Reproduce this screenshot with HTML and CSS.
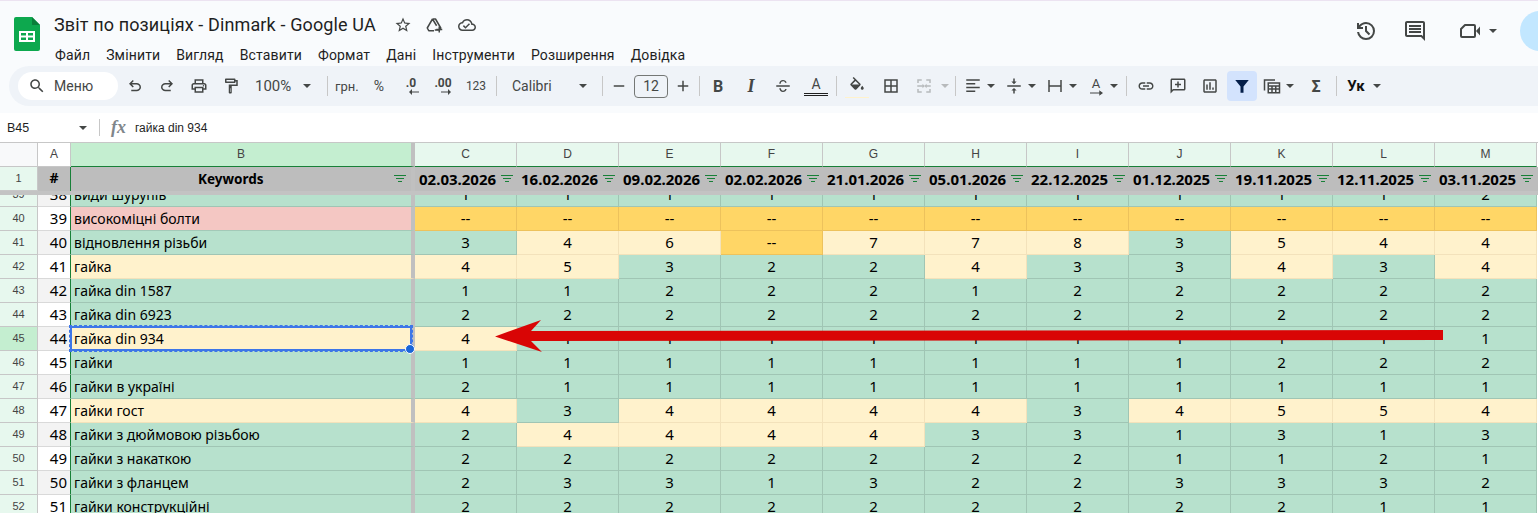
FILE: index.html
```html
<!DOCTYPE html>
<html lang="uk">
<head>
<meta charset="utf-8">
<title>Звіт по позиціях - Dinmark - Google UA</title>
<link rel="stylesheet" href="styles.css">
</head>
<body>
<header class="top">
  <div class="titlebar">
    <svg class="logo" viewBox="0 0 26 34"><path fill="#0da84e" d="M2 0h16l8 8v24a2 2 0 0 1-2 2H2a2 2 0 0 1-2-2V2a2 2 0 0 1 2-2z"/><path fill="#0a7f3a" d="M18 0l8 8h-8z"/><path fill="#fff" d="M5 14h16v11H5z"/><path fill="#0da84e" d="M7 16h5v2.500H7zM14 16h5v2.500h-5zM7 20.500h5V23H7zM14 20.500h5V23h-5z"/></svg>
    <div class="titlecol">
      <div class="titleline">
        <span class="doc">Звіт по позиціях - Dinmark - Google UA</span>
        <svg class="ic18 star" viewBox="0 0 24 24"><path d="M22 9.240l-7.190-.620L12 2 9.190 8.630 2 9.240l5.460 4.730L5.820 21 12 17.270 18.180 21l-1.630-7.030L22 9.240zM12 15.400l-3.760 2.270 1-4.280-3.320-2.880 4.380-.380L12 6.100l1.710 4.040 4.380.380-3.320 2.880 1 4.280L12 15.400z"/></svg>
        <svg class="ic18 drive" viewBox="0 0 24 24"><path class="ln" d="M10 4h4l7 12-1.500 2.500H13M10 4L3 16l2 3.500h7M10 4l5.500 9"/><path d="M18 14h2v3h3v2h-3v3h-2v-3h-3v-2h3z"/></svg>
        <svg class="ic18 cloud" viewBox="0 0 24 24"><path d="M19.350 10.040C18.670 6.590 15.640 4 12 4 9.110 4 6.600 5.640 5.350 8.040 2.340 8.360 0 10.910 0 14c0 3.310 2.690 6 6 6h13c2.760 0 5-2.240 5-5 0-2.640-2.050-4.780-4.650-4.960zM19 18H6c-2.210 0-4-1.790-4-4 0-2.050 1.530-3.760 3.560-3.970l1.070-.110.500-.950C8.080 7.140 9.940 6 12 6c2.620 0 4.880 1.860 5.390 4.430l.300 1.500 1.530.110c1.560.100 2.780 1.410 2.780 2.960 0 1.650-1.350 3-3 3zm-9-3.820l-2.090-2.090L6.500 13.500 10 17l6.010-6.010-1.410-1.410z"/></svg>
      </div>
      <nav class="menu"><span>Файл</span><span>Змінити</span><span>Вигляд</span><span>Вставити</span><span>Формат</span><span>Дані</span><span>Інструменти</span><span>Розширення</span><span>Довідка</span></nav>
    </div>
    <div class="actions">
      <svg class="ic24" viewBox="0 0 24 24"><path d="M12 21q-3.450 0-6.013-2.288T3.050 13H5.100q.350 2.600 2.313 4.300T12 19q2.925 0 4.963-2.037T19 12q0-2.925-2.037-4.962T12 5q-1.725 0-3.225.800T6.250 8H9v2H3V4h2v2.350q1.275-1.600 3.113-2.475T12 3q3.750 0 6.375 2.625T21 12q0 3.750-2.625 6.375T12 21zm2.800-4.800L11 12.400V7h2v4.600l3.200 3.200-1.400 1.400z"/></svg>
      <svg class="ic24 act-comment" viewBox="0 0 24 24"><path d="M20 17.170L18.830 16H4V4h16v13.170zM20 2H4c-1.100 0-2 .900-2 2v12c0 1.100.900 2 2 2h14l4 4V4c0-1.100-.900-2-2-2zM6 12h12v2H6zM6 9h12v2H6zM6 6h12v2H6z"/></svg>
      <svg class="ic24 act-cam" viewBox="0 0 24 24"><path class="ln2" d="M7 6h9a1 1 0 0 1 1 1v10a1 1 0 0 1-1 1H4a1 1 0 0 1-1-1v-7z"/><path d="M18 12l4-4.500v9z"/></svg>
      <i class="caret act-caret"></i>
      <span class="avatar"></span>
    </div>
  </div>
  <div class="toolbar">
    <div class="search"><svg class="ic18" viewBox="0 0 24 24"><path d="M15.500 14h-.790l-.280-.270C15.410 12.590 16 11.110 16 9.500 16 5.910 13.090 3 9.500 3S3 5.910 3 9.500 5.910 16 9.500 16c1.610 0 3.090-.590 4.230-1.570l.270.280v.790l5 4.990L20.490 19l-4.990-5zm-6 0C7.010 14 5 11.990 5 9.500S7.010 5 9.500 5 14 7.010 14 9.500 11.990 14 9.500 14z"/></svg><span>Меню</span></div>
    <span class="btn w32 ml1"><svg class="ic18" viewBox="0 0 24 24"><path d="M7 19v-2h7.100c1.050 0 1.960-.330 2.730-1s1.170-1.500 1.170-2.500-.390-1.830-1.170-2.500-1.680-1-2.730-1H7.800l2.600 2.600L9 14 4 9l5-5 1.400 1.400L7.800 8h6.300c1.620 0 3 .530 4.150 1.580S20 11.960 20 13.500s-.580 2.870-1.750 3.920S15.720 19 14.100 19H7z"/></svg></span>
    <span class="btn w32"><svg class="ic18 flip" viewBox="0 0 24 24"><path d="M7 19v-2h7.100c1.050 0 1.960-.330 2.730-1s1.170-1.500 1.170-2.500-.390-1.830-1.170-2.500-1.680-1-2.730-1H7.800l2.600 2.600L9 14 4 9l5-5 1.400 1.400L7.800 8h6.300c1.620 0 3 .530 4.150 1.580S20 11.960 20 13.500s-.580 2.870-1.750 3.920S15.720 19 14.100 19H7z"/></svg></span>
    <span class="btn w32"><svg class="ic18" viewBox="0 0 24 24"><path d="M19 8h-1V3H6v5H5c-1.660 0-3 1.340-3 3v6h4v4h12v-4h4v-6c0-1.660-1.340-3-3-3zM8 5h8v3H8V5zm8 12v2H8v-4h8v2zm2-2v-2H6v2H4v-4c0-.550.450-1 1-1h14c.550 0 1 .450 1 1v4h-2z"/><circle cx="18" cy="11.500" r="1"/></svg></span>
    <span class="btn w32"><svg class="ic18" viewBox="0 0 24 24"><path d="M18 4V3c0-.550-.450-1-1-1H5c-.550 0-1 .450-1 1v4c0 .550.450 1 1 1h12c.550 0 1-.450 1-1V6h1v4H9v11c0 .550.450 1 1 1h2c.550 0 1-.450 1-1v-9h8V4h-3zm-2 2H6V4h10v2zm-5 8v6h0v-6z"/><path fill="#eff3f8" d="M10.700 15h.600v5h-.600z"/></svg></span>
    <span class="btn zoom"><span>100%</span><i class="caret"></i></span>
    <i class="sep"></i>
    <span class="btn txt w28 left">грн.</span>
    <span class="btn txt w32 pct">%</span>
    <span class="btn w32 dec"><b>.0</b><svg viewBox="0 0 10 6"><path d="M10 2.500H3V0L0 3l3 3V3.500h7z"/></svg></span>
    <span class="btn w32 dec"><b>.00</b><svg viewBox="0 0 10 6"><path d="M0 2.500h7V0l3 3-3 3V3.500H0z"/></svg></span>
    <span class="btn txt w34 small">123</span>
    <i class="sep ml3"></i>
    <span class="btn font"><span>Calibri</span><i class="caret"></i></span>
    <i class="sep"></i>
    <span class="btn w18"><svg class="ic18" viewBox="0 0 24 24"><path d="M5 11h14v2H5z"/></svg></span>
    <span class="size">12</span>
    <span class="btn w18 ml6"><svg class="ic18" viewBox="0 0 24 24"><path d="M19 13h-6v6h-2v-6H5v-2h6V5h2v6h6z"/></svg></span>
    <i class="sep"></i>
    <span class="btn w22 ml0 bold">B</span>
    <span class="btn w32 ml6 ital">I</span>
    <span class="btn w32"><svg class="ic18" viewBox="0 0 24 24"><path d="M3 11h18v2H3zM7 9c0-3 2.500-5 5-5 2.400 0 4.300 1.500 4.800 3.500h-2c-.400-1-1.500-1.700-2.800-1.700-1.500 0-3 1-3 2.700v.500H7zM9.100 15c.300 1.600 1.400 3.200 2.900 3.200 1.400 0 2.500-.800 2.900-2.200h2c-.500 2.400-2.500 4-4.900 4-2.700 0-4.600-2.200-5-5z"/></svg></span>
    <span class="btn w32 ml1 tcolor"><span>A</span></span>
    <i class="sep ml4"></i>
    <span class="btn w26 fill"><svg class="ic18" viewBox="0 0 24 24"><path d="M16.560 8.940L7.620 0 6.210 1.410l2.380 2.380-5.150 5.150c-.590.590-.590 1.540 0 2.120l5.500 5.500c.290.290.680.440 1.060.440s.770-.150 1.060-.440l5.500-5.500c.590-.580.590-1.530 0-2.120zM5.210 10L10 5.210 14.790 10H5.210zM19 11.500s-2 2.170-2 3.500c0 1.100.900 2 2 2s2-.900 2-2c0-1.330-2-3.500-2-3.500z"/></svg></span>
    <span class="btn w32 ml5"><svg class="ic18" viewBox="0 0 24 24"><path d="M3 3v18h18V3H3zm8 16H5v-6h6v6zm0-8H5V5h6v6zm8 8h-6v-6h6v6zm0-8h-6V5h6v6z"/></svg></span>
    <span class="btn w32 ml1 off"><svg class="ic18" viewBox="0 0 24 24"><path d="M3 3h6v2H5v3H3zM15 3h6v5h-2V5h-4zM3 16h2v3h4v2H3zM19 16h2v5h-6v-2h4zM3 11h7V9l3 3-3 3v-2H3zM21 13h-5.500v2l-3-3 3-3v2H21z"/></svg></span>
    <span class="btn w10"><i class="caret off-c"></i></span>
    <i class="sep ml5"></i>
    <span class="btn w20"><svg class="ic18" viewBox="0 0 24 24"><path d="M3 3h18v2H3zM3 8h12v2H3zM3 13h18v2H3zM3 18h12v2H3z"/></svg></span>
    <span class="btn w8 ml4"><i class="caret"></i></span>
    <span class="btn w22 ml8"><svg class="ic18" viewBox="0 0 24 24"><path d="M3 11h18v2H3zM12 9.500l-3.500-3.500H11V2h2v4h2.500zM12 14.500l3.500 3.500H13v4h-2v-4H8.500z"/></svg></span>
    <span class="btn w8 ml3"><i class="caret"></i></span>
    <span class="btn w22 ml8"><svg class="ic18" viewBox="0 0 24 24"><path d="M3 4h2v16H3zM19 4h2v16h-2zM5 11h14v2H5z"/></svg></span>
    <span class="btn w8 ml3"><i class="caret"></i></span>
    <span class="btn w22 ml8 rot"><span>A</span><svg viewBox="0 0 14 6"><path d="M0 2.500h10V0l4 3-4 3V3.500H0z"/></svg></span>
    <span class="btn w8 ml3"><i class="caret"></i></span>
    <i class="sep ml8"></i>
    <span class="btn w24"><svg class="ic18" viewBox="0 0 24 24"><path d="M3.900 12c0-1.710 1.390-3.100 3.100-3.100h4V7H7c-2.760 0-5 2.240-5 5s2.240 5 5 5h4v-1.900H7c-1.710 0-3.100-1.390-3.100-3.100zM8 13h8v-2H8v2zm9-6h-4v1.900h4c1.710 0 3.100 1.390 3.100 3.100s-1.390 3.100-3.100 3.100h-4V17h4c2.760 0 5-2.240 5-5s-2.240-5-5-5z"/></svg></span>
    <span class="btn w32 ml4"><svg class="ic18" viewBox="0 0 24 24"><path d="M2 4c0-1.100.900-2 2-2h16c1.100 0 2 .900 2 2v12c0 1.100-.900 2-2 2H6l-4 4V4zm2 13.170L5.170 16H20V4H4v13.170zM11 6h2v3h3v2h-3v3h-2v-3H8V9h3z"/></svg></span>
    <span class="btn w32"><svg class="ic18" viewBox="0 0 24 24"><path d="M19 3H5c-1.100 0-2 .900-2 2v14c0 1.100.900 2 2 2h14c1.100 0 2-.900 2-2V5c0-1.100-.900-2-2-2zm0 16H5V5h14v14zM7 10h2v7H7zM11 7h2v10h-2zM15 14h2v3h-2z"/></svg></span>
    <span class="btn w30 ml1 active"><svg class="ic18" viewBox="0 0 24 24"><path d="M3 4h18l-7 8.500V21h-4v-8.500z"/></svg></span>
    <span class="btn w22 ml4"><svg class="ic18" viewBox="0 0 24 24"><path d="M1 3h15v2H3v13H1zM6 7h17v15H6zm2 2v2h13V9zm0 4v2h3v-2zm5 0v2h3v-2zm5 0v2h3v-2zM8 17v3h3v-3zm5 0v3h3v-3zm5 0v3h3v-3z"/></svg></span>
    <span class="btn w8 ml3"><i class="caret"></i></span>
    <span class="btn w32 ml6 sigma">Σ</span>
    <i class="sep ml4"></i>
    <span class="btn w24 lang">Ук</span>
    <span class="btn w8 ml5"><i class="caret"></i></span>
  </div>
</header>
<div class="fbar">
  <span class="ref">B45</span><i class="caret"></i><i class="fsep"></i><span class="fx">fx</span><span class="ftext">гайка din 934</span>
</div>
<main class="sheet">
  <div class="frozen">
    <div class="row heads">
      <div class="corner"></div><div class="h white">A</div><div class="h sel">B</div>
      <div class="h">C</div><div class="h">D</div><div class="h">E</div><div class="h">F</div><div class="h">G</div><div class="h">H</div><div class="h">I</div><div class="h">J</div><div class="h">K</div><div class="h">L</div><div class="h">M</div>
    </div>
    <div class="row titles">
      <div class="n">1</div><div class="hash">#</div>
      <div class="t kw">Keywords<i class="flt"></i></div>
      <div class="t">02.03.2026<i class="flt"></i></div><div class="t">16.02.2026<i class="flt"></i></div><div class="t">09.02.2026<i class="flt"></i></div><div class="t">02.02.2026<i class="flt"></i></div><div class="t">21.01.2026<i class="flt"></i></div><div class="t">05.01.2026<i class="flt"></i></div><div class="t">22.12.2025<i class="flt"></i></div><div class="t">01.12.2025<i class="flt"></i></div><div class="t">19.11.2025<i class="flt"></i></div><div class="t">12.11.2025<i class="flt"></i></div><div class="t">03.11.2025<i class="flt"></i></div>
    </div>
  </div>
  <div class="viewport">
  <div class="rows">
    <div class="row"><div class="n">39</div><div class="a s">38</div><div class="k g">види шурупів</div><div class="g">1</div><div class="g">1</div><div class="g">1</div><div class="g">1</div><div class="g">1</div><div class="g">1</div><div class="g">1</div><div class="g">1</div><div class="g">1</div><div class="g">1</div><div class="g">2</div></div>
    <div class="row"><div class="n">40</div><div class="a">39</div><div class="k p">високоміцні болти</div><div class="y">--</div><div class="y">--</div><div class="y">--</div><div class="y">--</div><div class="y">--</div><div class="y">--</div><div class="y">--</div><div class="y">--</div><div class="y">--</div><div class="y">--</div><div class="y">--</div></div>
    <div class="row"><div class="n">41</div><div class="a s">40</div><div class="k g">відновлення різьби</div><div class="g">3</div><div class="c">4</div><div class="c">6</div><div class="y">--</div><div class="c">7</div><div class="c">7</div><div class="c">8</div><div class="g">3</div><div class="c">5</div><div class="c">4</div><div class="c">4</div></div>
    <div class="row"><div class="n">42</div><div class="a">41</div><div class="k c">гайка</div><div class="c">4</div><div class="c">5</div><div class="g">3</div><div class="g">2</div><div class="g">2</div><div class="c">4</div><div class="g">3</div><div class="g">3</div><div class="c">4</div><div class="g">3</div><div class="c">4</div></div>
    <div class="row"><div class="n">43</div><div class="a s">42</div><div class="k g">гайка din 1587</div><div class="g">1</div><div class="g">1</div><div class="g">2</div><div class="g">2</div><div class="g">2</div><div class="g">1</div><div class="g">2</div><div class="g">2</div><div class="g">2</div><div class="g">2</div><div class="g">2</div></div>
    <div class="row"><div class="n">44</div><div class="a">43</div><div class="k g">гайка din 6923</div><div class="g">2</div><div class="g">2</div><div class="g">2</div><div class="g">2</div><div class="g">2</div><div class="g">2</div><div class="g">2</div><div class="g">2</div><div class="g">2</div><div class="g">2</div><div class="g">2</div></div>
    <div class="row"><div class="n cur">45</div><div class="a s">44</div><div class="k c">гайка din 934<span class="selbox"><i class="handle"></i></span></div><div class="c">4</div><div class="g">1</div><div class="g">1</div><div class="g">1</div><div class="g">1</div><div class="g">1</div><div class="g">1</div><div class="g">1</div><div class="g">1</div><div class="g">1</div><div class="g">1</div></div>
    <div class="row"><div class="n">46</div><div class="a">45</div><div class="k g">гайки</div><div class="g">1</div><div class="g">1</div><div class="g">1</div><div class="g">1</div><div class="g">1</div><div class="g">1</div><div class="g">1</div><div class="g">1</div><div class="g">2</div><div class="g">2</div><div class="g">2</div></div>
    <div class="row"><div class="n">47</div><div class="a s">46</div><div class="k g">гайки в україні</div><div class="g">2</div><div class="g">1</div><div class="g">1</div><div class="g">1</div><div class="g">1</div><div class="g">1</div><div class="g">1</div><div class="g">1</div><div class="g">1</div><div class="g">1</div><div class="g">1</div></div>
    <div class="row"><div class="n">48</div><div class="a">47</div><div class="k c">гайки гост</div><div class="c">4</div><div class="g">3</div><div class="c">4</div><div class="c">4</div><div class="c">4</div><div class="c">4</div><div class="g">3</div><div class="c">4</div><div class="c">5</div><div class="c">5</div><div class="c">4</div></div>
    <div class="row"><div class="n">49</div><div class="a s">48</div><div class="k g">гайки з дюймовою різьбою</div><div class="g">2</div><div class="c">4</div><div class="c">4</div><div class="c">4</div><div class="c">4</div><div class="g">3</div><div class="g">3</div><div class="g">1</div><div class="g">3</div><div class="g">1</div><div class="g">3</div></div>
    <div class="row"><div class="n">50</div><div class="a">49</div><div class="k g">гайки з накаткою</div><div class="g">2</div><div class="g">2</div><div class="g">2</div><div class="g">2</div><div class="g">2</div><div class="g">2</div><div class="g">2</div><div class="g">1</div><div class="g">1</div><div class="g">2</div><div class="g">1</div></div>
    <div class="row"><div class="n">51</div><div class="a s">50</div><div class="k g">гайки з фланцем</div><div class="g">2</div><div class="g">3</div><div class="g">3</div><div class="g">1</div><div class="g">3</div><div class="g">2</div><div class="g">2</div><div class="g">3</div><div class="g">3</div><div class="g">3</div><div class="g">2</div></div>
    <div class="row"><div class="n">52</div><div class="a">51</div><div class="k g">гайки конструкційні</div><div class="g">2</div><div class="g">2</div><div class="g">2</div><div class="g">2</div><div class="g">2</div><div class="g">2</div><div class="g">2</div><div class="g">2</div><div class="g">2</div><div class="g">1</div><div class="g">1</div></div>
  </div>
  </div>
</main>
<svg class="arrow" viewBox="0 0 1538 513"><path d="M495 336.500 541 320 531 331 1443 330v10L531 341l11 11z"/></svg>
</body>
</html>
```
FILE: styles.css
```css
* { box-sizing: border-box; }
html, body { margin: 0; height: 513px; overflow: hidden; background: #fff; }
body { font-family: Roboto, "Liberation Sans", sans-serif; color: #1f1f1f; position: relative; }
svg { fill: #444746; display: block; flex: none; }
i { display: block; }
.ln { fill: none; stroke: #444746; stroke-width: 2; stroke-linejoin: round; }
.ln2 { fill: none; stroke: #444746; stroke-width: 2; stroke-linejoin: round; }

.top { height: 113px; background: #f9fbfd; border-top: 1px solid #ece3f1; }
.titlebar { height: 65px; display: flex; padding: 16px 0 0 14px; position: relative; }
.logo { width: 26px; height: 34px; }
.titlecol { margin-left: 14px; margin-top: -1px; }
.titleline { display: flex; align-items: center; height: 18px; }
.doc { font-size: 18px; line-height: 18px; letter-spacing: .13px; color: #1f1f1f; width: 321px; white-space: nowrap; }
.ic18 { width: 18px; height: 18px; }
.ic24 { width: 24px; height: 24px; }
.star { margin-left: 19px; }
.drive { margin-left: 13px; }
.cloud { margin-left: 15px; }
.menu { display: flex; gap: 16px; margin: 12px 0 0 1px; font-size: 14px; line-height: 18px; letter-spacing: .14px; color: #1f1f1f; white-space: nowrap; }
.actions { display: flex; align-items: center; position: absolute; top: 3px; left: 1354px; height: 54px; }
.act-comment { margin-left: 25px; }
.act-cam { margin-left: 31px; }
.act-caret { margin-left: 7px; }
.avatar { width: 40px; height: 40px; border-radius: 50%; background: #c2e7ff; margin-left: 23px; flex: none; }

.caret { width: 0; height: 0; border-left: 4px solid transparent; border-right: 4px solid transparent; border-top: 4px solid #444746; flex: none; }
.off-c { border-top-color: #b7babc; }

.toolbar { height: 40px; margin-left: 9px; padding-left: 9px; border-radius: 20px 0 0 20px; background: #eff3f8; display: flex; align-items: center; white-space: nowrap; overflow: hidden; }
.search { width: 100px; height: 28px; background: #fff; border-radius: 14px; display: flex; align-items: center; padding-left: 10px; font-size: 14px; color: #444746; flex: none; }
.search span { margin-left: 8px; }
.btn { height: 30px; display: flex; align-items: center; justify-content: center; flex: none; color: #444746; }
.w8 { width: 8px; } .w10 { width: 10px; } .w18 { width: 18px; } .w20 { width: 20px; } .w22 { width: 22px; } .w24 { width: 24px; } .w26 { width: 26px; } .w28 { width: 28px; } .w30 { width: 30px; } .w32 { width: 32px; } .w34 { width: 34px; }
.ml0 { margin-left: 0; } .ml1 { margin-left: 1px; } .ml3 { margin-left: 3px; } .ml4 { margin-left: 4px; } .ml5 { margin-left: 5px; } .ml6 { margin-left: 6px; } .ml8 { margin-left: 8px; }
.sep { width: 1px; height: 20px; background: #c7c7c7; margin-right: 7px; margin-left: 7px; flex: none; }
.sep.ml3 { margin-left: 3px; } .sep.ml4 { margin-left: 4px; } .sep.ml5 { margin-left: 5px; } .sep.ml8 { margin-left: 8px; }
.flip { transform: scaleX(-1); }
.zoom { width: 73px; justify-content: flex-start; padding-left: 8px; font-size: 15px; }
.zoom .caret { margin-left: 12px; }
.txt { font-size: 13px; }
.pct { font-size: 14px; }
.left { justify-content: flex-start; }
.small { font-size: 12px; }
.dec { flex-direction: column; line-height: 12px; }
.dec b { font-size: 12px; font-weight: 700; margin-top: -1px; }
.dec svg { width: 10px; height: 6px; margin: 0 0 0 6px; }
.font { width: 91px; justify-content: flex-start; padding-left: 8px; font-size: 14px; }
.font span { width: 67px; }
.size { width: 34px; height: 23px; border: 1px solid #747775; border-radius: 4px; margin-left: 6px; text-align: center; font-size: 14px; line-height: 21px; color: #444746; flex: none; }
.bold { font-weight: 700; font-size: 16px; }
.ital { font-family: "Liberation Serif", serif; font-style: italic; font-weight: 700; font-size: 18px; }
.tcolor { flex-direction: column; font-size: 14px; line-height: 16px; }
.tcolor span { width: 24px; text-align: center; border-bottom: 3px double #1f1f1f; height: 20px; }
.fill { position: relative; }
.fill::after { content: ""; position: absolute; left: 1px; right: 1px; bottom: 3px; height: 1px; background: #fff2cc; }
.off svg { fill: #b7babc; }
.rot { flex-direction: column; font-size: 13px; line-height: 13px; }
.rot svg { width: 13px; height: 6px; }
.active { background: #d3e3fd; border-radius: 4px; }
.active svg { fill: #041e49; }
.sigma { font-size: 16px; font-weight: 700; }
.lang { font-size: 15px; font-weight: 700; color: #111; }

.fbar { height: 29px; display: flex; align-items: center; padding-left: 7px; font-size: 12.500px; color: #1f1f1f; font-family: "Liberation Sans", sans-serif; }
.ref { width: 72px; }
.fsep { width: 1px; height: 17px; background: #c7c7c7; margin-left: 12px; }
.fx { font-family: "Liberation Serif", serif; font-style: italic; font-weight: 700; font-size: 18px; color: #80868b; margin-left: 11px; width: 24px; }
.ftext { font-size: 12px; }

.sheet { height: 371px; overflow: hidden; font-family: "Noto Sans", "Liberation Sans", sans-serif; }
.frozen { position: relative; z-index: 1; }
.viewport { height: 318px; overflow: hidden; }
.row { display: grid; grid-template-columns: 38px 33px 344px repeat(11, 102px); height: 24px; font-size: 15px; line-height: 23px; color: #000; }
.row > div { border-right: 1px solid rgba(0,0,0,.12); border-bottom: 1px solid rgba(0,0,0,.12); text-align: center; white-space: nowrap; overflow: hidden; }
.heads { height: 25px; border-top: 1px solid #c7c7c7; }
.heads > .h, .heads > .corner { border-right: 1px solid #c7c7c7; border-bottom: 1px solid #188038; font: 12px/23px "Liberation Sans", sans-serif; color: #444; background: #e7f8ee; }
.heads > .corner { background: #f8f9fa; border-bottom-color: #c7c7c7; }
.heads > .white { background: #fff; border-bottom-color: #c7c7c7; }
.heads > .sel { background: #c4eed0; border-right: 4px solid #c0c0c0; }
.titles { height: 28px; border-bottom: 4px solid #c3c3c3; font-weight: 700; background: #bdbdbd; line-height: 22px; }
.titles > div { border: 0; }
.row > .n { background: #e7f8ee; border-right: 1px solid #c7c7c7; border-bottom: 1px solid #c7c7c7; font: 11px/23px "Liberation Sans", sans-serif; color: #444; }
.row > .n.cur { background: #c4eed0; }
.row > .hash { background: #bdbdbd; font-size: 14px; border-right: 1px solid #188038; }
.row > .a { background: #fff; border-right: 1px solid #188038; border-bottom: 1px solid #d9d9d9; text-align: right; padding-right: 3px; font-size: 15px; }
.row > .a.s { background: #f3f3f3; }
.row > .t { display: flex; justify-content: space-between; align-items: center; padding: 0 4px 1px; font-size: 15px; }
.row > .t.kw { border-right: 4px solid #c0c0c0; padding: 0 5px 1px 127px; font-size: 13.500px; }
.flt { width: 12px; height: 7px; flex: none; background: linear-gradient(#188038 0 0) 0 0/12px 1px no-repeat, linear-gradient(#188038 0 0) 2px 3px/8px 1px no-repeat, linear-gradient(#188038 0 0) 4px 6px/4px 1px no-repeat; }
.row > .k { text-align: left; padding-left: 3px; border-right: 4px solid #c0c0c0; position: relative; overflow: visible; font-size: 14px; }
.rows { margin-top: -12px; }
.row > .g { background: #b7e1cd; }
.row > .c { background: #fff2cc; border-color: #f3e2bb; }
.row > .y { background: #ffd666; border-color: #edc25c; }
.row > .p { background: #f4c7c3; border-bottom-color: #a3c9b8; }
.row > .k.g, .row > .k.c, .row > .k.p { border-right-color: #c0c0c0; }
.selbox { position: absolute; left: -1px; top: -1px; right: -1px; bottom: -1px; border: 2px solid #3d76e8; outline: 1px dashed #3d76e8; z-index: 2; }
.handle { position: absolute; right: -5px; bottom: -5px; width: 10px; height: 10px; border-radius: 50%; background: #1a66d8; border: 1px solid #fff; }
.arrow { position: absolute; left: 0; top: 0; width: 1538px; height: 513px; fill: #d90505; z-index: 3; pointer-events: none; }
```
